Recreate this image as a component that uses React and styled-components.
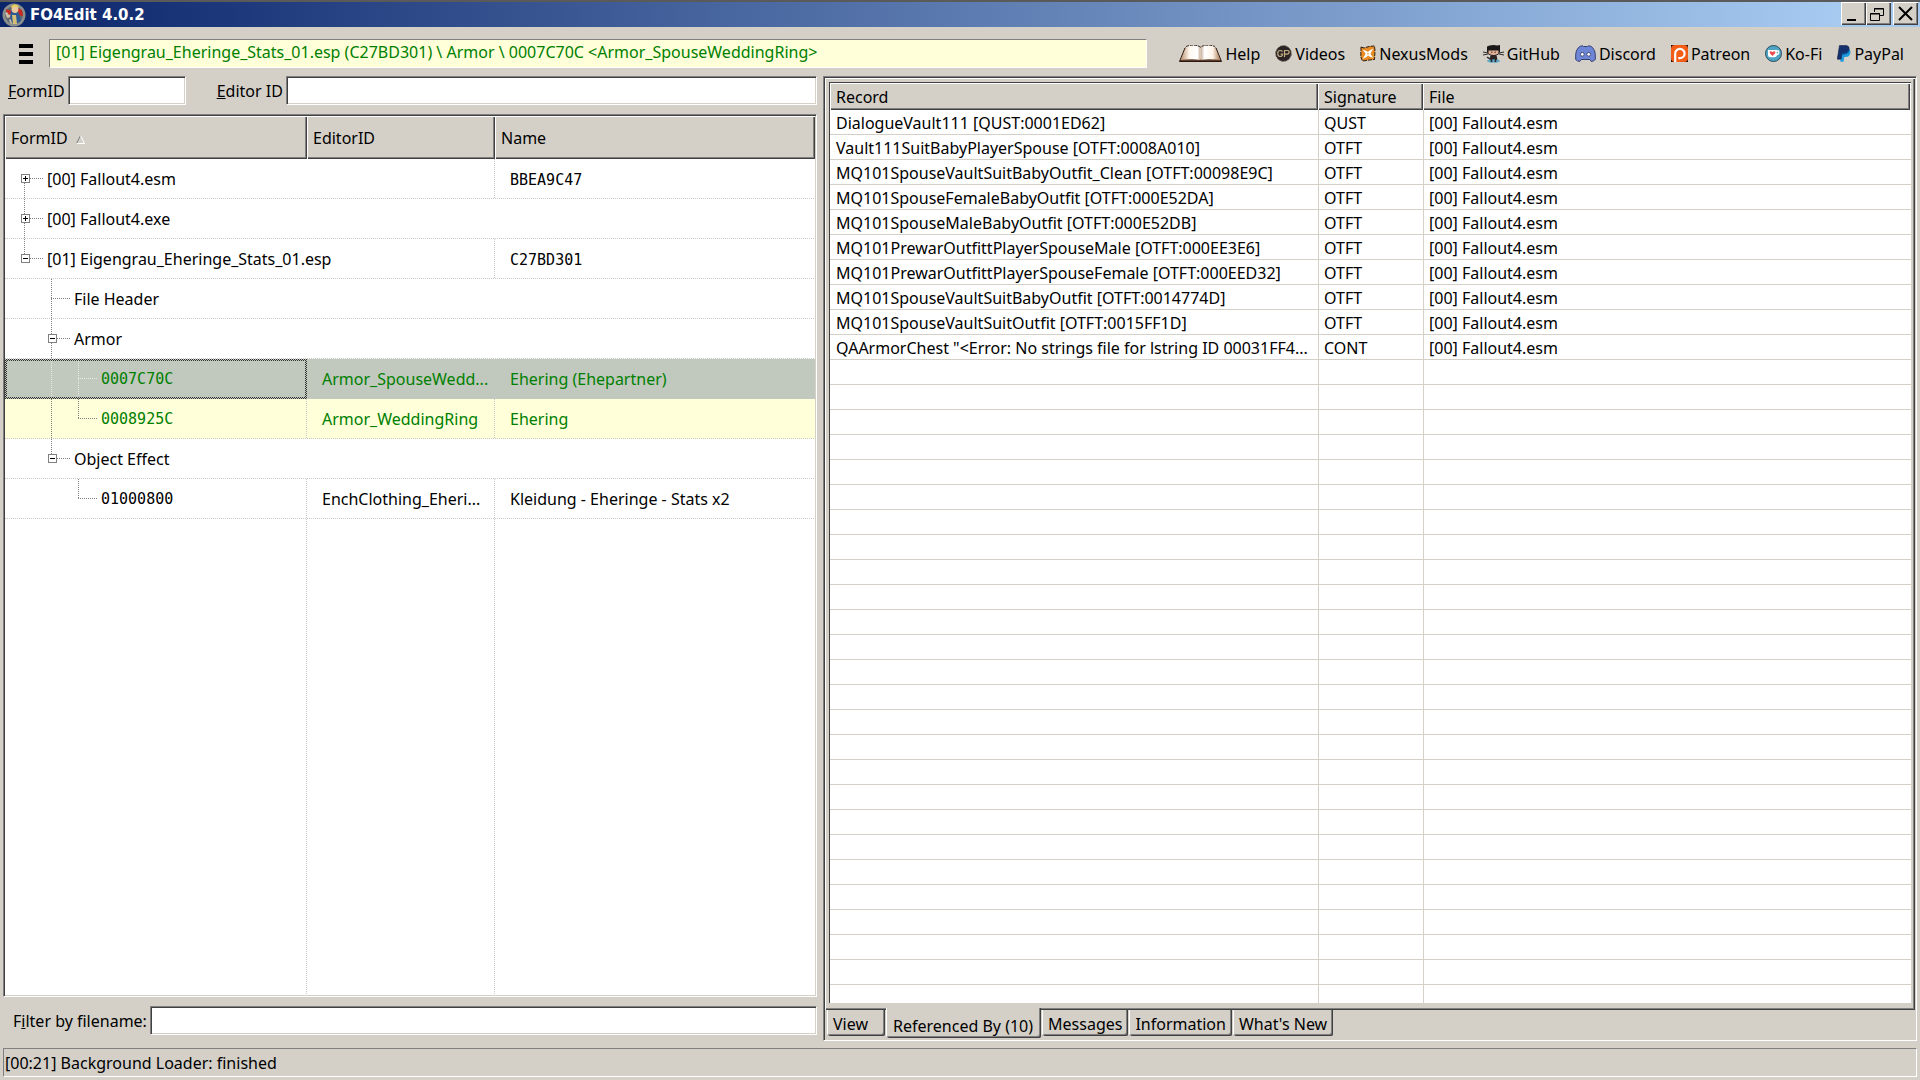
import React from "react";
import styled, { createGlobalStyle, css } from "styled-components";

const FACE = "#d4d0c8";
const SHADOW = "#808080";
const DARK = "#404040";
const GREEN = "#008000";
const CREAM = "#ffffd9";
const SELECTED = "#c1c8be";
const LINE = "#c8c8c8";

const Global = createGlobalStyle`
  *, *::before, *::after { box-sizing: border-box; }
  body {
    margin: 0;
    background: ${FACE};
    color: #000;
    font: 16px/20px "Noto Sans", sans-serif;
  }
  button, input { font: inherit; color: inherit; }
`;

const sunken = css`
  border: 1px solid;
  border-color: ${SHADOW} #fff #fff ${SHADOW};
  box-shadow: inset 1px 1px ${DARK}, inset -1px -1px ${FACE};
`;

const Window = styled.div`
  height: 100vh;
  display: flex;
  flex-direction: column;
  overflow: hidden;
  padding-bottom: 3px;
`;

const TitleBar = styled.header`
  flex: none;
  display: flex;
  align-items: center;
  height: 27px;
  padding: 0 2px 0 2px;
  border-top: 2px solid #5a5a5a;
  background: linear-gradient(90deg, #0a246a, #a6caf0 96%);
`;

const Title = styled.h1`
  flex: 1;
  margin: 0 0 0 4px;
  color: #fff;
  font: bold 15px/20px "DejaVu Sans", sans-serif;
`;

const CaptionButton = styled.button`
  width: 25px;
  height: 23px;
  padding: 0;
  margin-left: ${(p) => (p.$apart ? 2 : 0)}px;
  margin-bottom: 2px;
  display: grid;
  place-items: center;
  border: 0;
  background: ${FACE};
  box-shadow: inset 1px 1px #fff, inset -1px -1px ${DARK}, inset -2px -2px ${SHADOW};
`;

const Toolbar = styled.div`
  flex: none;
  display: flex;
  align-items: center;
  height: 49px;
  padding: 4px 16px 0 19px;
`;

const MenuButton = styled.button`
  width: 14px;
  height: 20px;
  margin-right: 16px;
  padding: 0;
  border: 0;
  background: repeating-linear-gradient(#000 0 4px, transparent 4px 8px);
`;

const PathBox = styled.input`
  flex: 1;
  min-width: 0;
  height: 29px;
  padding: 0 6px 3px;
  border: 1px solid;
  border-color: ${SHADOW} #fff #fff ${SHADOW};
  background: ${CREAM};
  color: ${GREEN};
  outline: 0;
`;

const Links = styled.nav`
  display: flex;
  gap: 15px;
  margin-left: 32px;
`;

const Link = styled.a`
  display: flex;
  align-items: center;
  gap: 3px;
  color: #000;
  text-decoration: none;
  white-space: nowrap;
`;

const Body = styled.main`
  flex: 1;
  min-height: 0;
  display: grid;
  grid-template-columns: 823px minmax(0, 1fr);
  padding-right: 3px;
`;

const LeftPane = styled.section`
  min-height: 0;
  display: flex;
  flex-direction: column;
  gap: 9px;
  padding: 0 6px 6px 3px;
`;

const FieldRow = styled.div`
  flex: none;
  display: flex;
  align-items: center;
  padding-left: ${(p) => p.$indent}px;
`;

const FieldLabel = styled.label`
  margin-right: 3px;
  white-space: nowrap;
`;

const Field = styled.input`
  ${sunken}
  height: 29px;
  min-width: 0;
  width: ${(p) => (p.$width ? p.$width + "px" : "auto")};
  flex: ${(p) => (p.$width ? "none" : 1)};
  margin-right: ${(p) => (p.$width ? 31 : 0)}px;
  padding: 0 5px;
  background: #fff;
  outline: 0;
`;

const Tree = styled.div`
  ${sunken}
  flex: 1;
  min-height: 0;
  display: flex;
  flex-direction: column;
  padding: 1px;
  background: #fff;
  overflow: hidden;
`;

const dotsDown = (color) => `repeating-linear-gradient(180deg, ${color} 0 1px, transparent 1px 2px)`;
const dotsAcross = (color) => `repeating-linear-gradient(90deg, ${color} 0 1px, transparent 1px 2px)`;

const Table = styled.table`
  flex: none;
  width: 100%;
  table-layout: fixed;
  border-collapse: separate;
  border-spacing: 0;
`;

const HeadCell = styled.th`
  height: ${(p) => p.$height}px;
  padding: 0 6px;
  text-align: left;
  font-weight: normal;
  background: ${FACE};
  box-shadow: inset 1px 1px #fff, inset -1px -1px ${DARK}, inset -2px -2px ${SHADOW};

  svg { margin-left: 8px; }
`;

const TreeRow = styled.tr`
  background: ${(p) => (p.$selected ? SELECTED : p.$changed ? CREAM : "#fff")};
  color: ${(p) => (p.$changed ? GREEN : "#000")};
`;

const TreeCell = styled.td`
  height: 40px;
  padding: 0 2px 0 ${(p) => (p.$node ? 19 : 15)}px;
  overflow: hidden;
  white-space: nowrap;
  background-image: ${dotsAcross(LINE)}, ${dotsDown(LINE)};
  background-size: 100% 1px, ${(p) => (p.$last ? 0 : 1)}px 100%;
  background-position: 0 100%, 100% 0;
  background-repeat: no-repeat;
  ${(p) =>
    p.$focused &&
    css`
      padding: 0 4px 0 17px;
      border: 2px solid transparent;
      background: linear-gradient(${SELECTED}, ${SELECTED}) padding-box,
        repeating-conic-gradient(#303030 0 25%, ${SELECTED} 0 50%) 0 0 / 2px 2px border-box;
    `}
`;

const Code = styled.span`
  font-family: "DejaVu Sans Mono", monospace;
  font-size: 15px;
`;

const Node = styled.div`
  display: flex;
  align-items: center;
  height: 40px;
  margin: ${(p) => (p.$focused ? -2 : 0)}px 0;
`;

const REACH = { full: "0 0 / 1px 40px", top: "0 0 / 1px 20px", bottom: "0 20px / 1px 20px", none: "0 0 / 0 0" };

const Branch = styled.span`
  position: relative;
  flex: none;
  width: ${(p) => (p.$joint ? 23 : 27)}px;
  height: 40px;
  background: ${(p) => `${dotsDown(p.$light ? "#e8e8e8" : SHADOW)} ${REACH[p.$reach]} no-repeat,
    ${dotsAcross(p.$light ? "#e8e8e8" : SHADOW)} 0 19px / ${p.$joint ? 20 : 0}px 1px no-repeat`};
`;

const Toggle = styled.button`
  position: absolute;
  left: -3px;
  top: 15px;
  width: 9px;
  height: 9px;
  padding: 0;
  border: 1px solid ${SHADOW};
  background: linear-gradient(#000, #000) center / 5px 1px no-repeat,
    linear-gradient(#000, #000) center / 1px ${(p) => (p.$open ? 0 : 5)}px no-repeat, #fff;
`;

const TreeFill = styled.div`
  flex: 1;
  background: ${dotsDown(LINE)} 301px 0 / 1px 100% no-repeat, ${dotsDown(LINE)} 489px 0 / 1px 100% no-repeat;
`;

const RightPane = styled.section`
  min-height: 0;
  display: flex;
  flex-direction: column;
  padding: 1px 1px 1px 1px;
  border: 1px solid;
  border-color: ${SHADOW} #fff #fff ${SHADOW};
  box-shadow: inset 1px 1px ${DARK};
`;

const TabPage = styled.div`
  flex: 1;
  min-height: 0;
  display: flex;
  padding: 4px 4px 7px 4px;
  box-shadow: inset 1px 1px #fff, inset -1px -1px ${DARK}, inset -2px -2px ${SHADOW};
`;

const List = styled.div`
  flex: 1;
  min-width: 0;
  border: solid ${DARK};
  border-width: 1px 0 0 1px;
  padding-right: 1px;
  overflow: hidden;
  background: linear-gradient(${FACE}, ${FACE}) 488px 0 / 1px 100% no-repeat,
    linear-gradient(${FACE}, ${FACE}) 593px 0 / 1px 100% no-repeat,
    repeating-linear-gradient(#fff 0 24px, ${FACE} 24px 25px) 0 27px, #fff;
`;

const ListCell = styled.td`
  height: 25px;
  padding: 1px 2px 0 ${(p) => (p.$first ? 6 : 5)}px;
  border-bottom: 1px solid ${FACE};
  border-left: ${(p) => (p.$first ? 0 : 1)}px solid ${FACE};
  overflow: hidden;
  white-space: nowrap;
`;

const Tabs = styled.div`
  flex: none;
  display: flex;
  align-items: flex-start;
  height: 29px;
  padding-left: 2px;
`;

const Tab = styled.button`
  position: relative;
  height: ${(p) => (p.$active ? 30 : 26)}px;
  margin-top: ${(p) => (p.$active ? -2 : 0)}px;
  margin-right: 1px;
  padding: ${(p) => (p.$active ? "5px 8px 0 7px" : "1px 6px 0")};
  min-width: 58px;
  text-align: left;
  border: 0;
  border-radius: 0 0 2px 2px;
  background: ${FACE};
  box-shadow: inset 1px 0 #fff, inset -1px -1px ${DARK}, inset -2px -2px ${SHADOW};
`;

const Status = styled.footer`
  flex: none;
  display: flex;
  align-items: center;
  height: 29px;
  margin: 7px 3px 0 3px;
  padding: 0 1px;
  border: 1px solid;
  border-color: ${SHADOW} #fff #fff ${SHADOW};
`;

const AppIcon = () => (
  <svg width="24" height="24" viewBox="0 0 24 24" aria-hidden="true">
    <circle cx="12" cy="12" r="11.5" fill="#8d8f8c" />
    <circle cx="12" cy="12" r="9" fill="#5f6a70" />
    <path d="M4 6l6 2 1 6-6 1zM15 5l5 2 1 6-6-1z" fill="#c82a22" />
    <path d="M3 10l2-1 2 3 2-1 1 3-5 1zM7 17l4-2 1 5-3 1z" fill="#c9bfa8" />
    <path d="M9 8h7l2 6 1 4-5 3-4-1-2-6z" fill="#2d5a94" />
    <path d="M10 12h4l1 9h-4z" fill="#d8bf78" />
    <circle cx="13" cy="6.500" r="3.400" fill="#e9c8a0" />
    <path d="M9 5c0-4 7-5 8 0-3-2-5-1-8 0z" fill="#e8cf57" />
  </svg>
);

const BookIcon = () => (
  <svg width="43" height="18" viewBox="0 0 43 18" aria-hidden="true">
    <defs>
      <linearGradient id="pageLeft"><stop offset="0" stopColor="#b98e6c" /><stop offset=".45" stopColor="#fff8f0" /><stop offset=".85" stopColor="#fff" /><stop offset="1" stopColor="#c3a790" /></linearGradient>
      <linearGradient id="pageRight"><stop offset="0" stopColor="#c3a790" /><stop offset=".2" stopColor="#fff" /><stop offset=".6" stopColor="#fff4e8" /><stop offset="1" stopColor="#a87852" /></linearGradient>
    </defs>
    <path d="M6 3L.5 16.5h42L37 3z" fill="#5b3a28" stroke="#2a1a12" />
    <path d="M7 2q8-3 14.500.5v12.500q-8-1.500-20 0z" fill="url(#pageLeft)" />
    <path d="M36 2q-8-3-14.500.5v12.500q8-1.500 20 0z" fill="url(#pageRight)" />
    <path d="M7 1.500q8-3 14.500.5 6.500-3.500 14.500-.5" fill="none" stroke="#3a2a20" strokeDasharray="3 1" />
    <path d="M21.500 3v11" stroke="#d8c8b8" />
  </svg>
);

const VideosIcon = () => (
  <svg width="17" height="17" viewBox="0 0 17 17" aria-hidden="true">
    <circle cx="8.500" cy="8.500" r="7.700" fill="#2b2426" stroke="#4a3e3a" strokeDasharray="3 1" />
    <path d="M7.500 6.600Q6.800 5.500 5 5.500 2.800 5.500 2.800 8.500T5 11.500Q7.500 11.500 7.500 9H5.500M9.500 12V5.500h2.600q2 0 2 1.800t-2 1.800H9.500" fill="none" stroke="#c4b184" strokeWidth="1.200" />
  </svg>
);

const NexusIcon = () => (
  <svg width="16" height="17" viewBox="0 0 16 17" aria-hidden="true">
    <path d="M1 2l3 1 5-1.500 5.500-.5.500 5-.5 8.500-5 .5-7 1L.8 12z" fill="#e98b24" stroke="#2d1c0c" strokeDasharray="4 1" />
    <path d="M2.500 4.500l4 1.500 1.500 1 1.500-1.500 4-2-2.500 4-.5 1.500 3 4-4-1.500-1.500-1-1.500 1.500-4 2 2.500-4 .5-1.500z" fill="#fff" />
    <circle cx="8" cy="8.700" r="1" fill="#f3b878" />
  </svg>
);

const GitHubIcon = () => (
  <svg width="21" height="18" viewBox="0 0 21 18" aria-hidden="true">
    <path d="M4 1.500L6.500.5q4-.8 8 0l2.500-.5v7l-2 3H6L4 7z" fill="#1b1818" />
    <path d="M5.500 5h10v3.500q-5 3-10 0z" fill="#dfb29a" />
    <path d="M4.500 3.500h12v2h-12z" fill="#1b1818" />
    <path d="M0 7l5 1M0 10l5-1M21 7l-5 1M21 10l-5-1" stroke="#1b1818" strokeWidth=".9" />
    <path d="M7.500 10h6l1 5-1.500 1h-5L6.500 15z" fill="#2a2626" />
    <path d="M4 12l3 2" stroke="#2a2626" strokeWidth="1.500" />
    <path d="M8 7.200h1.500M11.500 7.200H13" stroke="#5a2b22" />
    <ellipse cx="10.500" cy="16" rx="6.500" ry="1.700" fill="#5fa9c9" />
    <path d="M8.500 12v5M12.500 12v5" stroke="#2a2626" strokeWidth="1.600" />
  </svg>
);

const DiscordIcon = () => (
  <svg width="21" height="17" viewBox="0 0 21 17" aria-hidden="true">
    <path d="M3.500 2.500Q5 1 7.500.7l1 .8h4l1-.8q2.500.3 4 1.800 2.800 3 2.800 7v5q-1.500 1.700-4 2l-1.500-2h-8.600l-1.500 2q-2.500-.3-4-2v-5q0-4 2.800-7z" fill="#6f86d6" stroke="#36406f" />
    <circle cx="7.300" cy="9.300" r="1.900" fill="#fff" stroke="#36406f" strokeWidth=".9" />
    <circle cx="13.700" cy="9.300" r="1.900" fill="#fff" stroke="#36406f" strokeWidth=".9" />
  </svg>
);

const PatreonIcon = () => (
  <svg width="17" height="17" viewBox="0 0 17 17" aria-hidden="true">
    <path d="M0 0h17v17H0z" fill="#1c120c" />
    <rect width="17" height="17" rx="4" fill="#f45d16" />
    <path d="M4.200 17V8.500a4.700 4.700 0 1 1 4.700 4.700H7.300" fill="none" stroke="#fff" strokeWidth="2.200" />
  </svg>
);

const KofiIcon = () => (
  <svg width="17" height="17" viewBox="0 0 17 17" aria-hidden="true">
    <circle cx="8.500" cy="8.500" r="8" fill="#4fa3c4" stroke="#2b4d5c" />
    <path d="M3 5h9q2.500 0 2.500 2.400T12 10.300q-.7 2-2.500 2H5.500q-2.500 0-2.500-2.500z" fill="#fff" />
    <path d="M11.800 6.500q1.400 0 1.400 1.100t-1.400 1.200z" fill="#4fa3c4" />
    <path d="M7.500 11L4.800 8.300q-.7-1.800.9-2 1.200 0 1.800 1 .6-1 1.800-1 1.600.2.900 2z" fill="#ef4b4b" />
  </svg>
);

const PaypalIcon = () => (
  <svg width="14" height="17" viewBox="0 0 14 17" aria-hidden="true">
    <path d="M5 4.500h7.500q1.500 1.500.8 4-1 3.500-4.800 3.500H7.300l-.8 4.700H3.300z" fill="#1b9ade" />
    <path d="M2.500.4h6.800q3.400.6 2.800 4.200-.8 4.200-5 4.200H5l-1 5.400H.3z" fill="#15306f" stroke="#0d1d45" strokeWidth=".6" />
    <path d="M5.300 8.800h1.800q3.600 0 4.900-3.400" stroke="#0b5aa8" fill="none" strokeWidth="1.200" />
  </svg>
);

const SortMark = () => (
  <svg width="9" height="9" viewBox="0 0 9 9" aria-hidden="true">
    <path d="M.5 8.500l4-8" stroke="#808080" />
    <path d="M4.500.5l4 8h-8" stroke="#fff" fill="none" />
  </svg>
);

const LINKS = [
  ["Help", BookIcon],
  ["Videos", VideosIcon],
  ["NexusMods", NexusIcon],
  ["GitHub", GitHubIcon],
  ["Discord", DiscordIcon],
  ["Patreon", PatreonIcon],
  ["Ko-Fi", KofiIcon],
  ["PayPal", PaypalIcon],
];

const NODES = [
  { label: "[00] Fallout4.esm", branches: ["bottom"], toggle: "closed", span: 2, name: "BBEA9C47", codeName: true },
  { label: "[00] Fallout4.exe", branches: ["full"], toggle: "closed", span: 3 },
  { label: "[01] Eigengrau_Eheringe_Stats_01.esp", branches: ["top"], toggle: "open", span: 2, name: "C27BD301", codeName: true },
  { label: "File Header", branches: ["none", "full"], span: 3 },
  { label: "Armor", branches: ["none", "full"], toggle: "open", span: 3 },
  { label: "0007C70C", code: true, branches: ["none", "full", "full"], editor: "Armor_SpouseWedd...", name: "Ehering (Ehepartner)", changed: true, selected: true },
  { label: "0008925C", code: true, branches: ["none", "full", "top"], editor: "Armor_WeddingRing", name: "Ehering", changed: true },
  { label: "Object Effect", branches: ["none", "top"], toggle: "open", span: 3 },
  { label: "01000800", code: true, branches: ["none", "none", "top"], editor: "EnchClothing_Eheri...", name: "Kleidung - Eheringe - Stats x2" },
];

const RECORDS = [
  ["DialogueVault111 [QUST:0001ED62]", "QUST"],
  ["Vault111SuitBabyPlayerSpouse [OTFT:0008A010]", "OTFT"],
  ["MQ101SpouseVaultSuitBabyOutfit_Clean [OTFT:00098E9C]", "OTFT"],
  ["MQ101SpouseFemaleBabyOutfit [OTFT:000E52DA]", "OTFT"],
  ["MQ101SpouseMaleBabyOutfit [OTFT:000E52DB]", "OTFT"],
  ["MQ101PrewarOutfittPlayerSpouseMale [OTFT:000EE3E6]", "OTFT"],
  ["MQ101PrewarOutfittPlayerSpouseFemale [OTFT:000EED32]", "OTFT"],
  ["MQ101SpouseVaultSuitBabyOutfit [OTFT:0014774D]", "OTFT"],
  ["MQ101SpouseVaultSuitOutfit [OTFT:0015FF1D]", "OTFT"],
  ['QAArmorChest "<Error: No strings file for lstring ID 00031FF4...', "CONT"],
];

const TABS = ["View", "Referenced By (10)", "Messages", "Information", "What's New"];

function TreeNode({ node }) {
  const { branches, toggle, label, code, selected, changed, span, editor, name, codeName } = node;
  return (
    <TreeRow $selected={selected} $changed={changed}>
      <TreeCell $node colSpan={span || 1} $focused={selected} $last={span === 3}>
        <Node $focused={selected}>
          {branches.map((reach, i) => (
            <Branch key={i} $reach={reach} $joint={i === branches.length - 1} $light={selected}>
              {toggle && i === branches.length - 1 && (
                <Toggle $open={toggle === "open"} aria-label={toggle === "open" ? "Collapse" : "Expand"} />
              )}
            </Branch>
          ))}
          {code ? <Code>{label}</Code> : label}
        </Node>
      </TreeCell>
      {editor && <TreeCell>{editor}</TreeCell>}
      {name && <TreeCell $last>{codeName ? <Code>{name}</Code> : name}</TreeCell>}
    </TreeRow>
  );
}

export default function App() {
  return (
    <Window>
      <Global />
      <TitleBar>
        <AppIcon />
        <Title>FO4Edit 4.0.2</Title>
        <CaptionButton aria-label="Minimize">
          <svg width="17" height="17"><path d="M2 14h9v2H2z" /></svg>
        </CaptionButton>
        <CaptionButton aria-label="Restore">
          <svg width="17" height="17" fill="none" stroke="#000">
            <path d="M4.500 7V3.500h9v7H10M4 4h10M.5 8.500h9v7h-9zM0 9h10" />
          </svg>
        </CaptionButton>
        <CaptionButton $apart aria-label="Close">
          <svg width="17" height="17" stroke="#000" strokeWidth="2"><path d="M2 2l13 13M15 2L2 15" /></svg>
        </CaptionButton>
      </TitleBar>

      <Toolbar>
        <MenuButton aria-label="Menu" />
        <PathBox
          aria-label="Path"
          readOnly
          value="[01] Eigengrau_Eheringe_Stats_01.esp (C27BD301) \ Armor \ 0007C70C <Armor_SpouseWeddingRing>"
        />
        <Links>
          {LINKS.map(([text, Icon]) => (
            <Link key={text} href="#">
              <Icon />
              {text}
            </Link>
          ))}
        </Links>
      </Toolbar>

      <Body>
        <LeftPane>
          <FieldRow $indent={5}>
            <FieldLabel htmlFor="form-id"><u>F</u>ormID</FieldLabel>
            <Field id="form-id" $width={118} />
            <FieldLabel htmlFor="editor-id"><u>E</u>ditor ID</FieldLabel>
            <Field id="editor-id" />
          </FieldRow>

          <Tree>
            <Table>
              <colgroup>
                <col style={{ width: 302 }} />
                <col style={{ width: 188 }} />
                <col />
              </colgroup>
              <thead>
                <tr>
                  <HeadCell $height={43}>FormID<SortMark /></HeadCell>
                  <HeadCell $height={43}>EditorID</HeadCell>
                  <HeadCell $height={43}>Name</HeadCell>
                </tr>
              </thead>
              <tbody>
                {NODES.map((node) => <TreeNode key={node.label} node={node} />)}
              </tbody>
            </Table>
            <TreeFill />
          </Tree>

          <FieldRow $indent={10}>
            <FieldLabel htmlFor="filter">F<u>i</u>lter by filename:</FieldLabel>
            <Field id="filter" />
          </FieldRow>
        </LeftPane>

        <RightPane>
          <TabPage>
            <List>
              <Table>
                <colgroup>
                  <col style={{ width: 488 }} />
                  <col style={{ width: 105 }} />
                  <col />
                </colgroup>
                <thead>
                  <tr>
                    <HeadCell $height={27}>Record</HeadCell>
                    <HeadCell $height={27}>Signature</HeadCell>
                    <HeadCell $height={27}>File</HeadCell>
                  </tr>
                </thead>
                <tbody>
                  {RECORDS.map(([record, signature]) => (
                    <tr key={record}>
                      <ListCell $first>{record}</ListCell>
                      <ListCell>{signature}</ListCell>
                      <ListCell>[00] Fallout4.esm</ListCell>
                    </tr>
                  ))}
                </tbody>
              </Table>
            </List>
          </TabPage>
          <Tabs role="tablist">
            {TABS.map((tab, i) => (
              <Tab key={tab} role="tab" aria-selected={i === 1} $active={i === 1}>{tab}</Tab>
            ))}
          </Tabs>
        </RightPane>
      </Body>

      <Status>[00:21] Background Loader: finished</Status>
    </Window>
  );
}
